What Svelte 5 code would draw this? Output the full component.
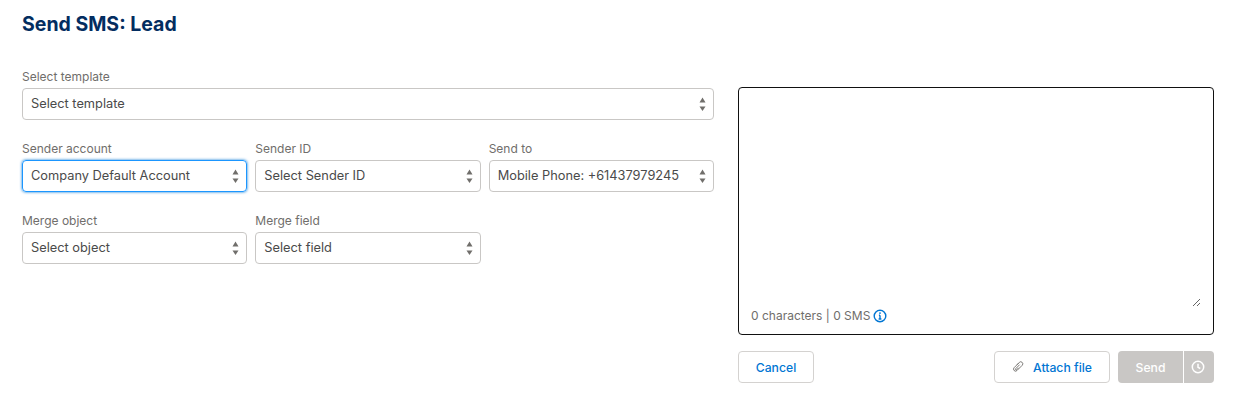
<script>
	const templateOptions = ["Select template"];
	const rows = [
		[
			{ label: "Sender account", value: "Company Default Account", focused: true },
			{ label: "Sender ID", value: "Select Sender ID" },
			{ label: "Send to", value: "Mobile Phone: +61437979245" },
		],
		[
			{ label: "Merge object", value: "Select object" },
			{ label: "Merge field", value: "Select field" },
		],
	];
</script>

{#snippet arrows()}
	<svg class="arrows" viewBox="0 0 7 16" aria-hidden="true">
		<path d="M3.500 1.500 6.500 6.500H.5Z" />
		<path d="M.5 10.500h6L3.500 15Z" />
	</svg>
{/snippet}

{#snippet field(label, value, focused)}
	<label class="field">
		<span class="label">{label}</span>
		<span class="select" class:focused>
			<select>
				<option>{value}</option>
			</select>
			{@render arrows()}
		</span>
	</label>
{/snippet}

<main class="page">
	<h1>Send SMS: Lead</h1>
	<div class="columns">
		<section class="form">
			{@render field("Select template", templateOptions[0], false)}
			{#each rows as row}
				<div class="row">
					{#each row as item}
						{@render field(item.label, item.value, item.focused)}
					{/each}
				</div>
			{/each}
		</section>

		<section class="composer">
			<div class="message">
				<textarea aria-label="Message"></textarea>
				<p class="count">
					0 characters | 0 SMS
					<svg class="info" viewBox="0 0 14 14" aria-hidden="true">
						<circle cx="7" cy="7" r="5.8" />
						<path d="M7 6.3v3.6M5.6 10h2.8M5.9 6.3H7" />
						<circle class="dot" cx="7" cy="4.1" r="0.9" />
					</svg>
				</p>
			</div>
			<div class="actions">
				<button class="btn cancel">Cancel</button>
				<div class="right">
					<button class="btn attach">
						<svg class="clip" viewBox="0 0 12 12" aria-hidden="true">
							<path d="M5 3.700 7.300 1.400a2 2 0 0 1 2.900 2.900L5 9.500a2 2 0 0 1-2.900 0 2 2 0 0 1 0-2.800L6.700 2.100M7.600 3.700 3.600 7.800a.7.700 0 0 0 1 1l2-2" />
						</svg>
						Attach file
					</button>
					<div class="send">
						<span class="send-label">Send</span>
						<span class="send-clock">
							<svg viewBox="0 0 14 14" aria-hidden="true">
								<circle cx="7" cy="7" r="5.700" />
								<path d="M7 3.800V7.300L9.300 8.500" />
							</svg>
						</span>
					</div>
				</div>
			</div>
		</section>
	</div>
</main>

<style>
	:global(body) {
		background: #fff;
	}
	.page {
		padding: 12px 26px 0 22px;
		font-family: Inter, "Liberation Sans", sans-serif;
		font-size: 12.8px;
		color: #5c5c5c;
	}
	h1 {
		margin: 0;
		font-size: 19.5px;
		line-height: 24px;
		font-weight: 700;
		color: #032d60;
	}
	.columns {
		display: grid;
		grid-template-columns: 692px 476px;
		gap: 24px;
		margin-top: 31px;
	}
	.form {
		display: flex;
		flex-direction: column;
		gap: 20px;
		padding-top: 1px;
	}
	.row {
		display: grid;
		grid-template-columns: repeat(3, 1fr);
		gap: 8px;
	}
	.field {
		display: flex;
		flex-direction: column;
		gap: 3px;
	}
	.label {
		font-size: 12px;
		line-height: 17px;
		color: #706e6b;
	}
	.select {
		position: relative;
		display: block;
		height: 32px;
		border: 1px solid #c9c7c5;
		border-radius: 4px;
		box-sizing: border-box;
	}
	.select.focused {
		border-color: #1b96ff;
		box-shadow: 0 0 3px #0176d3;
	}
	select {
		appearance: none;
		display: block;
		width: 100%;
		height: 100%;
		padding: 0 8px 1px;
		border: 0;
		background: transparent;
		font: inherit;
		color: #4a4a4a;
		outline: none;
	}
	.arrows {
		position: absolute;
		top: 7px;
		right: 7px;
		width: 7px;
		height: 16px;
		fill: #706e6b;
	}
	.composer {
		display: flex;
		flex-direction: column;
		gap: 16px;
		padding-top: 20px;
	}
	.message {
		display: flex;
		flex-direction: column;
		height: 248px;
		box-sizing: border-box;
		border: 1px solid #111;
		border-radius: 4px;
		padding: 0 12px 9px;
	}
	textarea {
		flex: 1;
		border: 0;
		outline: none;
		padding: 0;
		background: transparent;
		font: inherit;
	}
	.count {
		display: flex;
		align-items: center;
		gap: 3px;
		margin: 0;
		font-size: 12px;
		line-height: 18px;
		color: #706e6b;
	}
	.info {
		width: 14px;
		height: 14px;
		fill: none;
		stroke: #0176d3;
		stroke-width: 1.400;
	}
	.info .dot {
		fill: #0176d3;
		stroke: none;
	}
	.actions {
		display: flex;
		justify-content: space-between;
	}
	.right {
		display: flex;
		gap: 8px;
	}
	.btn {
		height: 32px;
		padding: 0;
		border: 1px solid #d4d2d0;
		border-radius: 4px;
		background: #fff;
		color: #0176d3;
		font: inherit;
		font-size: 12.2px;
		font-weight: 500;
	}
	.cancel {
		width: 76px;
	}
	.attach {
		display: flex;
		align-items: center;
		gap: 9px;
		width: 116px;
		justify-content: center;
	}
	.clip {
		width: 12px;
		height: 12px;
		fill: none;
		stroke: #706e6b;
		stroke-width: 0.9;
	}
	.send {
		display: flex;
		width: 96px;
		height: 32px;
		border-radius: 4px;
		background: #c9c7c5;
		color: #fff;
		font-size: 12.2px;
		font-weight: 500;
	}
	.send-label {
		flex: 1;
		display: flex;
		align-items: center;
		justify-content: center;
	}
	.send-clock {
		display: flex;
		align-items: center;
		justify-content: center;
		width: 28px;
		padding-right: 2px;
		border-left: 1px solid #fff;
	}
	.send-clock svg {
		width: 14px;
		height: 14px;
		fill: none;
		stroke: #fff;
		stroke-width: 1.500;
	}
</style>
